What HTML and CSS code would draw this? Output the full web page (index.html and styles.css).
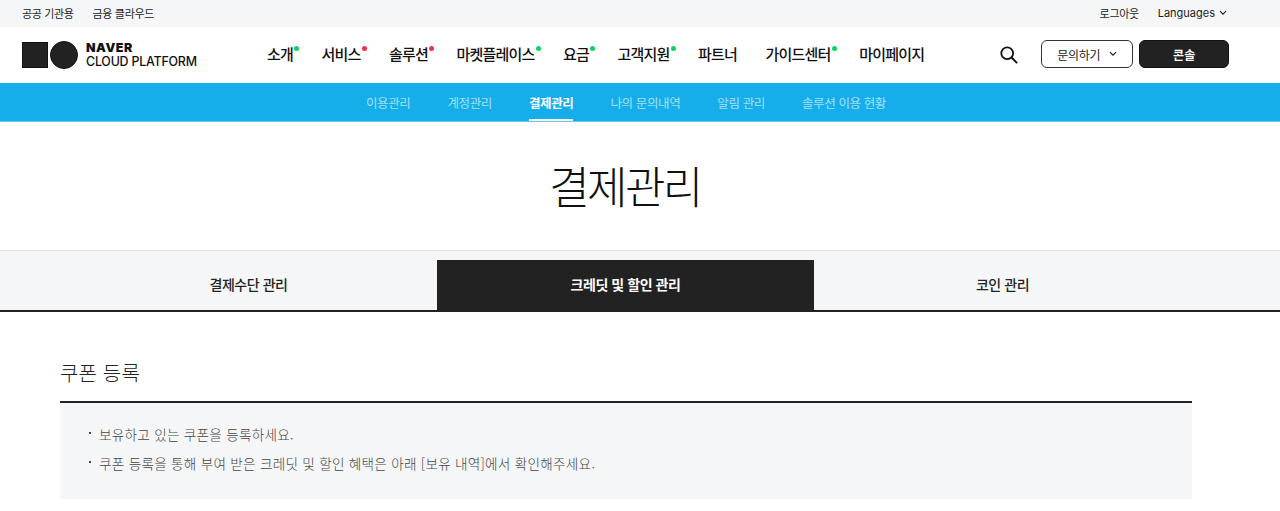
FILE: index.html
```html
<!DOCTYPE html>
<html lang="ko">
<head>
<meta charset="utf-8">
<title>결제관리</title>
<link rel="stylesheet" href="styles.css">
</head>
<body>
<div class="util">
  <div class="util-left"><a>공공 기관용</a><a>금융 클라우드</a></div>
  <div class="util-right"><a>로그아웃</a><a class="lang">Languages <svg class="chev" viewBox="0 0 8 6" width="8" height="6"><path d="M1 1.2l3 3 3-3" fill="none" stroke="#222" stroke-width="1.2"/></svg></a></div>
</div>
<header class="head">
  <div class="logo">
    <span class="logo-square"></span><span class="logo-circle"></span>
    <span class="logo-text"><b>NAVER</b><span>CLOUD PLATFORM</span></span>
  </div>
  <nav class="gnb">
    <a class="g">소개<i class="dot"></i></a>
    <a class="r">서비스<i class="dot"></i></a>
    <a class="r">솔루션<i class="dot"></i></a>
    <a class="g">마켓플레이스<i class="dot"></i></a>
    <a class="g">요금<i class="dot"></i></a>
    <a class="g">고객지원<i class="dot"></i></a>
    <a>파트너</a>
    <a class="g">가이드센터<i class="dot"></i></a>
    <a>마이페이지</a>
  </nav>
  <svg class="search" viewBox="0 0 18 18" width="18" height="18"><circle cx="7.2" cy="7.2" r="5.9" fill="none" stroke="#111" stroke-width="1.8"/><path d="M11.5 11.5l5.6 5.6" stroke="#111" stroke-width="2" fill="none"/></svg>
  <a class="btn btn-line">문의하기<svg class="chev" viewBox="0 0 8 6" width="8" height="6"><path d="M1 1.2l3 3 3-3" fill="none" stroke="#222" stroke-width="1.2"/></svg></a>
  <a class="btn btn-dark">콘솔</a>
</header>
<nav class="sub">
  <a>이용관리</a><a>계정관리</a><a class="on">결제관리</a><a>나의 문의내역</a><a>알림 관리</a><a>솔루션 이용 현황</a>
</nav>
<h1 class="title">결제관리</h1>
<div class="tabs">
  <a>결제수단 관리</a><a class="on">크레딧 및 할인 관리</a><a>코인 관리</a>
</div>
<main class="content">
  <h2 class="sec">쿠폰 등록</h2>
  <ul class="notice">
    <li>보유하고 있는 쿠폰을 등록하세요.</li>
    <li>쿠폰 등록을 통해 부여 받은 크레딧 및 할인 혜택은 아래 [보유 내역]에서 확인해주세요.</li>
  </ul>
</main>
</body>
</html>
```
FILE: styles.css
```css
* { box-sizing: border-box; }
html, body { margin: 0; height: 511px; overflow: hidden; }
body { background: #fff; color: #222; font-family: "Noto Sans CJK KR", "Noto Sans", sans-serif; }
a { color: inherit; text-decoration: none; }

.util { height: 27px; background: #f4f6f8; display: flex; justify-content: space-between; align-items: center; padding: 0 53px 1px 22px; font-size: 11px; letter-spacing: -0.35px; color: #222; }
.util-left, .util-right { display: flex; gap: 19px; }
.lang { font-family: "Inter", sans-serif; font-size: 11px; letter-spacing: 0; display: flex; align-items: center; gap: 4px; }
.util-right { align-items: center; }

.head { height: 56px; display: flex; align-items: center; padding-left: 22px; background: #fff; }
.logo { width: 245px; display: flex; align-items: center; flex: none; }
.logo-square { width: 26px; height: 26px; background: #222; border: 1px solid #111; }
.logo-circle { width: 28px; height: 28px; border-radius: 50%; background: #222; margin-left: 2px; border: 1px solid #111; }
.logo-text { display: flex; flex-direction: column; margin-left: 8px; font-family: "Inter", sans-serif; font-size: 12.4px; line-height: 14px; font-weight: 500; color: #111; letter-spacing: -0.2px; white-space: nowrap; }
.logo-text b { font-weight: 900; letter-spacing: 0.55px; }

.gnb { display: flex; gap: 28.5px; font-size: 15px; font-weight: 500; letter-spacing: -0.8px; color: #111; flex: none; margin-top: -2px; }
.gnb a { position: relative; display: block; line-height: 20px; }
.dot { position: absolute; right: -6px; top: 2px; width: 5px; height: 5px; border-radius: 50%; }
.g .dot { background: #0fd15f; }
.r .dot { background: #f5304a; }

.search { margin-left: 76px; flex: none; margin-top: -1px; }
.btn { flex: none; height: 28px; display: flex; align-items: center; justify-content: center; border-radius: 6px; font-size: 12px; margin-top: -2px; }
.btn-line { width: 92px; margin-left: 23px; border: 1px solid #333; gap: 9px; letter-spacing: -0.3px; }
.btn-dark { width: 90px; margin-left: 6px; background: #222; border: 1px solid #111; color: #fff; font-weight: 700; }

.sub { height: 39px; background: #15aeeb; border-bottom: 1px solid #63c9f2; display: flex; justify-content: center; gap: 37px; padding-right: 28px; font-size: 12.5px; letter-spacing: -0.38px; color: #a5e0f8; }
.sub a { height: 38px; line-height: 40px; position: relative; }
.sub .on { color: #fff; font-weight: 700; }
.sub .on::after { content: ""; position: absolute; left: 0; right: 0; bottom: 0; height: 2px; background: #fff; }

.title { margin: 0; height: 128px; display: flex; align-items: center; justify-content: center; font-size: 44px; font-weight: 300; letter-spacing: -2.6px; color: #111; padding: 0 30px 2px 0; }

.tabs { height: 62px; background: #f4f6f8; border-top: 1px solid #e0e2e5; border-bottom: 2px solid #222; padding-top: 9px; padding-left: 60px; padding-right: 88px; display: grid; grid-template-columns: 377px 377px 377px; justify-content: start; font-size: 14px; font-weight: 500; letter-spacing: -0.45px; }
.tabs a { display: flex; align-items: center; justify-content: center; color: #222; padding-bottom: 2px; }
.tabs .on { background: #222; color: #fff; font-weight: 700; }

.content { padding: 0 88px 0 60px; }
.sec { margin: 46px 0 0; height: 43px; font-size: 20px; font-weight: 300; line-height: 30px; color: #222; letter-spacing: 0.15px; }
.notice { list-style: none; margin: 0; height: 98px; padding: 16px 28px 0; background: #f4f6f8; border-top: 2px solid #222; font-size: 13.6px; font-weight: 300; color: #444; letter-spacing: 0.27px; }
.notice li { height: 29px; line-height: 30px; padding-left: 11px; position: relative; }
.notice li::before { content: ""; position: absolute; left: 1px; top: 13px; width: 2px; height: 2px; background: #444; }
```
